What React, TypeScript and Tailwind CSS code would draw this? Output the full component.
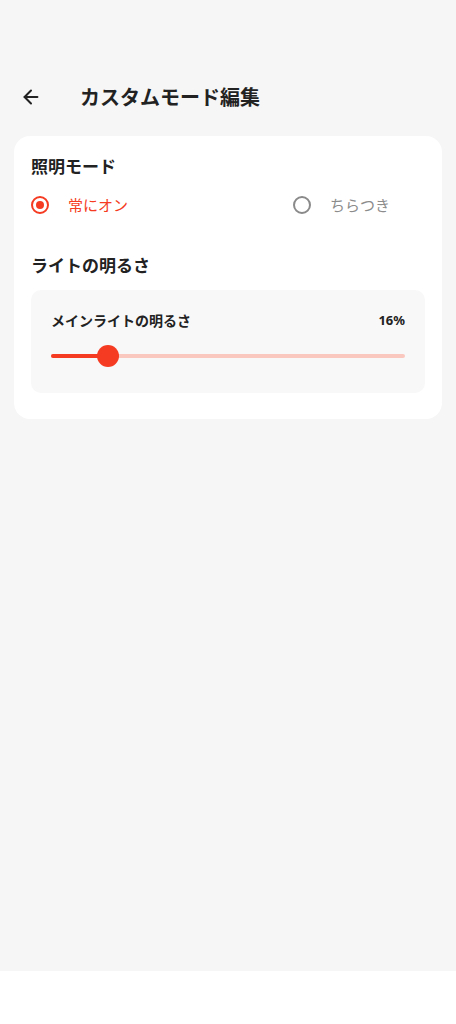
import { ArrowLeft } from 'lucide-react';

const font = { fontFamily: '"Noto Sans CJK JP", "Noto Sans", sans-serif' };

function Radio({ checked, label }: { checked: boolean; label: string }) {
  return (
    <div className="flex items-center gap-[19px]">
      <span
        className={
          'w-[18px] h-[18px] rounded-full border-2 flex items-center justify-center ' +
          (checked ? 'border-[#f53b22]' : 'border-[#8a8a8a]')
        }
      >
        {checked && <span className="w-[8px] h-[8px] rounded-full bg-[#f53b22]" />}
      </span>
      <span className={'text-[15px] ' + (checked ? 'text-[#f53b22]' : 'text-[#8c8c8c]')}>{label}</span>
    </div>
  );
}

export default function App() {
  const value = 16;

  return (
    <div className="h-[1024px] flex flex-col bg-white" style={font}>
      <div className="flex-1 bg-[#f6f6f6]">
        {/* Header */}
        <header className="flex items-center h-[60px] mt-[67px] px-[20px]">
          <ArrowLeft className="w-[22px] h-[22px] text-[#222]" strokeWidth={2.2} />
          <h1 className="ml-[38px] text-[20px] font-bold text-[#222]">カスタムモード編集</h1>
        </header>

        {/* Card */}
        <section className="mx-[14px] mt-[9px] bg-white rounded-[16px] px-[17px] pt-[17px] pb-[26px]">
          <h2 className="text-[17px] font-bold text-[#222] leading-[26px]">照明モード</h2>
          <div className="flex mt-[15px] h-[22px] items-center">
            <div className="w-[262px]">
              <Radio checked label="常にオン" />
            </div>
            <Radio checked={false} label="ちらつき" />
          </div>

          <h2 className="mt-[36px] text-[17px] font-bold text-[#222] leading-[26px]">ライトの明るさ</h2>

          <div className="mt-[12px] bg-[#f8f8f8] rounded-[10px] px-[20px] pt-[20px] pb-[26px]">
            <div className="flex items-center justify-between">
              <span className="text-[14px] font-bold text-[#222]">メインライトの明るさ</span>
              <span className="text-[13px] font-bold text-[#222]" style={{ fontFamily: '"Noto Sans", sans-serif' }}>
                {value}%
              </span>
            </div>
            <div className="relative h-[22px] mt-[14px] flex items-center">
              <div className="w-full h-[4px] rounded-full bg-[#fbc8c0]" />
              <div
                className="absolute left-0 h-[4px] rounded-full bg-[#f53b22]"
                style={{ width: `${value}%` }}
              />
              <div
                className="absolute w-[22px] h-[22px] rounded-full bg-[#f53b22] -translate-x-1/2"
                style={{ left: `${value}%` }}
              />
            </div>
          </div>
        </section>
      </div>
      <div className="h-[53px] bg-white" />
    </div>
  );
}
